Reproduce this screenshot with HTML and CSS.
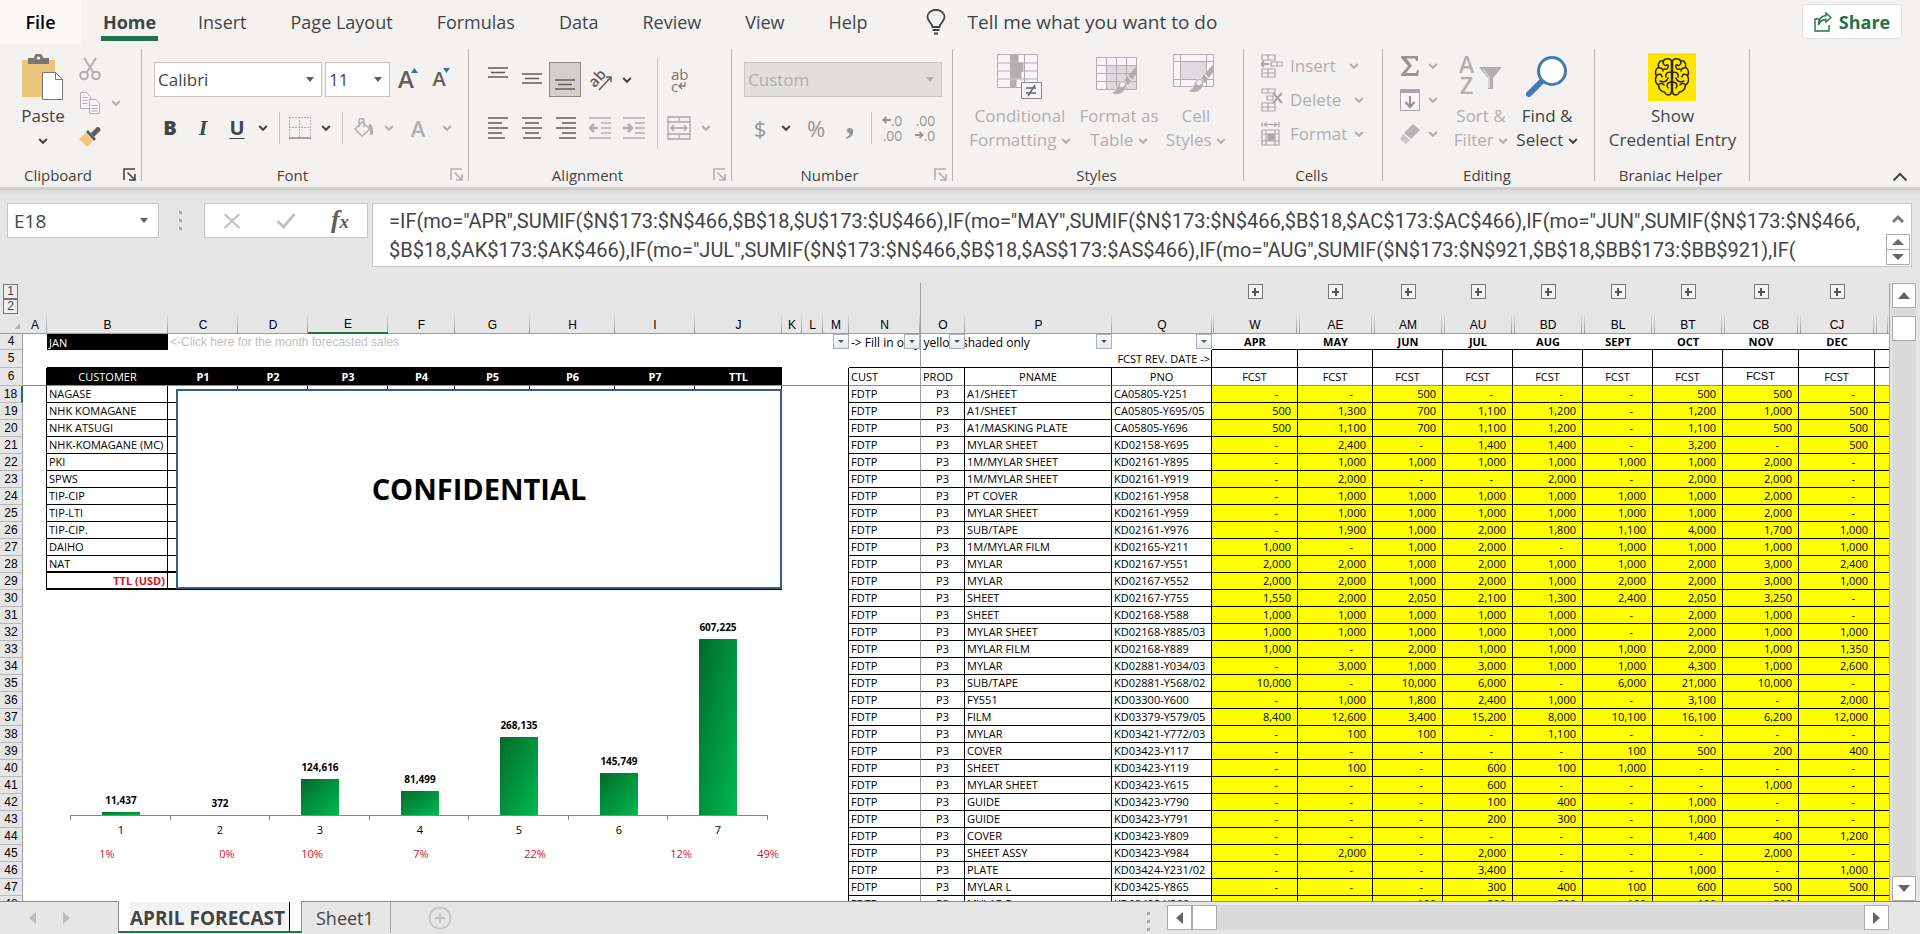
FILE: index.html
```html
<!DOCTYPE html>
<html lang="en">
<head>
<meta charset="utf-8">
<title>April Forecast</title>
<link rel="stylesheet" href="styles.css">
</head>
<body>
<svg class="defs" aria-hidden="true">
  <symbol id="chev" viewBox="0 0 10 10"><path d="M1.200 3l3.800 3.800L8.800 3" fill="none" stroke="currentColor" stroke-width="2"/></symbol>
  <symbol id="launch" viewBox="0 0 14 14"><path d="M1 12V1h11M4.500 4.500l7 7M12 6v6H6" fill="none" stroke="currentColor" stroke-width="1.600"/></symbol>
  <symbol id="brush" viewBox="0 0 34 44"><path d="M33 0v10L22 25l-6-5z" fill="#b1aeb0"/><path d="M22 13l5 6" stroke="#f3f2f1" stroke-width="1.500"/><path d="M17 19c-4-1-8 3-9 8-1 4-4 7-8 8 7 4 16 1 19-6 2-4 1-9-2-10z" fill="#b1aeb0" stroke="#f3f2f1"/><path d="M16 20c-4 0-6 4-5 7 4 2 7 0 8-4z" fill="#f3f2f1" stroke="#b1aeb0"/></symbol>
</svg>

<header class="ribbon">
  <nav class="tabs">
    <button class="tab file">File</button>
    <button class="tab home">Home</button>
    <button class="tab">Insert</button>
    <button class="tab">Page Layout</button>
    <button class="tab">Formulas</button>
    <button class="tab">Data</button>
    <button class="tab">Review</button>
    <button class="tab">View</button>
    <button class="tab">Help</button>
    <button class="tab tell"><svg width="20" height="26" viewBox="0 0 20 26" fill="none" stroke="#444" stroke-width="1.800"><path d="M6.500 18c0-4-5-5-5-10a8.500 7.200 0 0 1 17 0c0 5-5 6-5 10zM6.500 21h7"/><path d="M8 24.500h4" stroke-width="2"/></svg>Tell me what you want to do</button>
    <button class="share"><svg width="18" height="20" viewBox="0 0 18 20" fill="none" stroke="#217346" stroke-width="1.400"><path d="M5 7H1v12h14v-6"/><path d="M12 1l5 4.500-5 4.500V7.500C8 7.500 6 9 4.500 13 4.500 7 8 4 12 3.500z"/></svg>Share</button>
  </nav>

  <div class="groups">
    <section class="group g-clip">
      <div class="tools">
        <button class="big paste">
          <span class="pic"><svg width="42" height="46" viewBox="0 0 42 46"><rect x="0" y="6" width="33" height="37" fill="#ecc57c"/><path d="M6 4h6a4.500 4.500 0 0 1 9 0h6v6H6z" fill="#797775"/><circle cx="16.500" cy="4" r="1.600" fill="#f3f2f1"/><path d="M20.500 18.500h13l7 7v20h-20z" fill="#fff" stroke="#797775"/><path d="M33.500 18.500v7h7" fill="none" stroke="#797775"/></svg></span>
          <span>Paste</span><span><svg class="ch"><use href="#chev"/></svg></span>
        </button>
        <div class="stack">
          <button aria-label="Cut"><svg width="22" height="24" viewBox="0 0 22 24" fill="none" stroke="#b1aeb0"><g stroke-width="2"><path d="M5 1l9 14M17 1L8 15"/><circle cx="5" cy="18.500" r="3.800"/><circle cx="17" cy="18.500" r="3.800"/></g></svg></button>
          <button aria-label="Copy"><svg width="22" height="24" viewBox="0 0 22 24" fill="#f8f5fa" stroke="#b1aeb0"><path d="M1.500 1.500h6l4 4v12h-10z"/><path d="M3.500 6.500h5M3.500 9.500h5M3.500 12.500h5"/><path d="M10.500 8.500h6l4 4v10h-10z"/><path d="M12.500 14.500h6M12.500 17.500h6M12.500 20h6"/></svg><svg class="ch dim"><use href="#chev"/></svg></button>
          <button aria-label="Format Painter"><svg width="22" height="22" viewBox="0 0 22 22"><path d="M0 13l7-6 7 8-6 6z" fill="#ecc57c"/><path d="M7 6l2-2 8 9-2 2z" fill="#605e5c"/><path d="M12 7l6-6c3 0 4 2 3 4l-6 6z" fill="#605e5c"/></svg></button>
        </div>
      </div>
      <footer>Clipboard<button class="launch" aria-label="Clipboard options"><svg width="14" height="14"><use href="#launch"/></svg></button></footer>
    </section>

    <section class="group g-font">
      <div class="rows">
        <div class="row r-face">
          <span class="drop"><select aria-label="Font"><option>Calibri</option></select></span>
          <span class="drop"><select aria-label="Font size"><option>11</option></select></span>
          <button class="grow" aria-label="Increase font size"><b>A</b><svg width="7" height="6"><path d="M0 5l3.500-5L7 5z" fill="#3b6fae"/></svg></button>
          <button class="grow small" aria-label="Decrease font size"><b>A</b><svg width="7" height="6"><path d="M0 0h7L3.500 5z" fill="#3b6fae"/></svg></button>
        </div>
        <div class="row r-style">
          <button><b>B</b></button><button><i>I</i></button><button><u>U</u></button><button aria-label="Underline styles"><svg class="ch"><use href="#chev"/></svg></button><hr>
          <button aria-label="Borders"><svg width="22" height="22" viewBox="0 0 22 22" fill="none" stroke="#b7a9c4"><path d="M.5 0v20M10.500 0v20M21.500 0v20M0 .5h22M0 10.500h22" stroke-dasharray="2 1"/><path d="M0 21h22" stroke="#8a8886" stroke-width="1.500"/></svg></button>
          <button aria-label="Border styles"><svg class="ch"><use href="#chev"/></svg></button><hr>
          <button aria-label="Fill color"><svg width="20" height="20" viewBox="0 0 20 20" fill="none" stroke="#b1aeb0" stroke-width="1.500"><path d="M8 4l8 7-8 7-7-7zM5 9V3a2.500 2.500 0 0 1 5 0v6"/><path d="M15 7c3 2 3 6 2 10" stroke-width="3"/></svg></button>
          <button aria-label="Fill colors"><svg class="ch dim"><use href="#chev"/></svg></button>
          <button class="dimtext fontcolor">A</button>
          <button aria-label="Font colors"><svg class="ch dim"><use href="#chev"/></svg></button>
        </div>
      </div>
      <footer>Font<button class="launch dimtext" aria-label="Font options"><svg width="14" height="14"><use href="#launch"/></svg></button></footer>
    </section>

    <section class="group g-align">
      <div class="rows">
        <div class="row r-al r-top">
          <button aria-label="Top align"><svg class="ln" viewBox="0 0 20 34"><path d="M0 5h20M3 9.500h14M0 14h20"/></svg></button>
          <button aria-label="Middle align"><svg class="ln" viewBox="0 0 20 34"><path d="M0 11h20M3 15.500h14M0 20h20"/></svg></button>
          <button class="pressed" aria-label="Bottom align"><svg class="ln" viewBox="0 0 20 34"><path d="M0 17h20M3 21.500h14M0 26h20"/></svg></button>
          <button aria-label="Orientation"><svg width="24" height="24" viewBox="0 0 24 24"><text transform="rotate(-48 10 10)" x="-1" y="13" font-size="15" font-weight="600" fill="#605e5c">ab</text><path d="M9 22L21 9M16 9h5v5" fill="none" stroke="#605e5c" stroke-width="1.500"/></svg></button>
          <button aria-label="Orientations"><svg class="ch"><use href="#chev"/></svg></button>
        </div>
        <div class="row r-al">
          <button aria-label="Align left"><svg class="ln" viewBox="0 0 20 34"><path d="M0 7h20M0 12h14M0 17h20M0 22h14M0 27h17"/></svg></button>
          <button aria-label="Center"><svg class="ln" viewBox="0 0 20 34"><path d="M0 7h20M3 12h14M0 17h20M3 22h14M1 27h18"/></svg></button>
          <button aria-label="Align right"><svg class="ln" viewBox="0 0 20 34"><path d="M0 7h20M6 12h14M0 17h20M6 22h14M3 27h17"/></svg></button>
          <button aria-label="Decrease indent"><svg class="ln dim wide" viewBox="0 0 22 34"><path d="M0 7h22M12 12h10M12 17h10M12 22h10M0 27h22"/><path d="M1 17h8M5 13l-4 4 4 4" stroke-width="2.500"/></svg></button>
          <button aria-label="Increase indent"><svg class="ln dim wide" viewBox="0 0 22 34"><path d="M0 7h22M12 12h10M12 17h10M12 22h10M0 27h22"/><path d="M0 17h8M5 13l4 4-4 4" stroke-width="2.500"/></svg></button>
        </div>
      </div>
      <div class="wrapcol">
        <button class="wrap" aria-label="Wrap text"><span>ab</span><span>c<svg width="8" height="8" viewBox="0 0 8 8" fill="none" stroke="#797775"><path d="M7 0v4H1M4 1L1 4l3 3" stroke-width="1.300"/></svg></span></button>
        <button class="merge" aria-label="Merge and center"><svg width="24" height="24" viewBox="0 0 24 24" fill="none" stroke="#a9a5aa" stroke-width="1.300"><path d="M1 1h22v22H1zM1 6h22M1 18h22M12 1v5M12 18v5"/><path d="M4 12h16M7 9l-3 3 3 3M17 9l3 3-3 3"/></svg><svg class="ch dim"><use href="#chev"/></svg></button>
      </div>
      <footer>Alignment<button class="launch dimtext" aria-label="Alignment options"><svg width="14" height="14"><use href="#launch"/></svg></button></footer>
    </section>

    <section class="group g-num">
      <div class="rows">
        <div class="row"><span class="drop off"><select aria-label="Number format"><option>Custom</option></select></span></div>
        <div class="row r-num">
          <button class="sym">$</button><button aria-label="Currencies"><svg class="ch"><use href="#chev"/></svg></button><button class="sym pct">%</button><button class="sym comma">,</button><hr>
          <button class="dec"><span><svg width="9" height="8" viewBox="0 0 9 8"><path d="M1 4h8M4.500 1l-3 3 3 3" fill="none" stroke="#979593" stroke-width="2"/></svg>.0</span><span>.00</span></button><button class="dec"><span>.00</span><span><svg width="9" height="8" viewBox="0 0 9 8"><path d="M0 4h8M4.500 1l3 3-3 3" fill="none" stroke="#979593" stroke-width="2"/></svg>.0</span></button>
        </div>
      </div>
      <footer>Number<button class="launch dimtext" aria-label="Number options"><svg width="14" height="14"><use href="#launch"/></svg></button></footer>
    </section>

    <section class="group g-styles">
      <div class="tools">
        <button class="big dimtext"><span class="pic"><svg width="46" height="46" viewBox="0 0 46 46" stroke="#b1aeb0" fill="#f8f5fa"><path d="M.5.500h40v33H.5z"/><path d="M13.500 0v34M27.500 0v34M0 9h41M0 17h41M0 25h41"/><path d="M14 1h7v7h-7zM14 9h12v8H14zM14 17h10v7H14zM14 26h5v7h-5z" fill="#b1aeb0"/><path d="M24.500 28.500h20v16h-20z" stroke="#888"/><path d="M29 34h10M29 39h10M38 31l-7 11" stroke="#666" stroke-width="1.500"/></svg></span><span>Conditional</span><span>Formatting <svg class="ch"><use href="#chev"/></svg></span></button>
        <button class="big dimtext"><span class="pic"><svg width="46" height="46" viewBox="0 0 46 46"><path d="M.5 3.500h40v32H.5z" fill="#f8f5fa" stroke="#b1aeb0"/><path d="M10 12h30v23H10z" fill="#dedadd"/><path d="M10.500 4v31M20.500 4v31M30.500 4v31M0 11.500h41M0 19.500h41M0 27.500h41" stroke="#b1aeb0"/><use href="#brush" x="11" y="12" width="34" height="34"/></svg></span><span>Format as</span><span>Table <svg class="ch"><use href="#chev"/></svg></span></button>
        <button class="big dimtext"><span class="pic"><svg width="46" height="46" viewBox="0 0 46 46"><path d="M.5.500h40v32H.5z" fill="#f8f5fa" stroke="#b1aeb0"/><path d="M7.500 0v33M33.500 0v33M0 7.500h41M0 25.500h41" stroke="#b1aeb0"/><path d="M8 8h25v17H8z" fill="#dedadd"/><use href="#brush" x="11" y="10" width="34" height="34"/></svg></span><span>Cell</span><span>Styles <svg class="ch"><use href="#chev"/></svg></span></button>
      </div>
      <footer>Styles</footer>
    </section>

    <section class="group g-cells">
      <div class="stack dimtext">
        <button><svg width="22" height="24" viewBox="0 0 22 24" fill="none" stroke="#a9a5aa" stroke-width="1.200"><path d="M1 1h13v5H1zM7 1v5M1 15h13v8H1zM7 15v8M1 19h13M10 8h12v4H10zM16 8v4"/><path d="M0 10h8M3 7l-3 3 3 3" stroke-width="1.800"/></svg>Insert<svg class="ch far"><use href="#chev"/></svg></button>
        <button><svg width="22" height="24" viewBox="0 0 22 24" fill="none" stroke="#a9a5aa" stroke-width="1.200"><path d="M1 1h13v4H1zM7 1v4M1 15h13v8H1zM7 15v8M1 19h13M6 8h6v4H6z"/><path d="M12 5l9 10M21 5l-9 10" stroke-width="2.200"/></svg>Delete<svg class="ch far"><use href="#chev"/></svg></button>
        <button><svg width="22" height="24" viewBox="0 0 22 24" fill="none" stroke="#a9a5aa" stroke-width="1.200"><path d="M1 0v5M18 0v5M3 2.500h13M6 .5l-3 2 3 2M13 .5l3 2-3 2M1 8h17v15H1zM5 8v15M14 8v15M1 12h17M1 19h17"/><path d="M7 12h6v6H7z" fill="#a9a5aa"/></svg>Format<svg class="ch"><use href="#chev"/></svg></button>
      </div>
      <footer>Cells</footer>
    </section>

    <section class="group g-edit">
      <div class="tools">
        <div class="stack dimtext">
          <button aria-label="AutoSum"><svg width="20" height="20" viewBox="0 0 20 20"><path d="M1 0h17v5h-1.500L15 2.500H6.500L12 9.500 6 17h10l1.500-3H19l-1 6H1v-1.500L8 10 1 1.500z" fill="#979593"/></svg><svg class="ch"><use href="#chev"/></svg></button>
          <button aria-label="Fill"><svg width="20" height="22" viewBox="0 0 20 22"><path d="M.5.500h19v21H.5z" fill="#f8f5fa" stroke="#a9a5aa"/><path d="M0 0h20v4H0z" fill="#a9a5aa"/><path d="M10 7v10M5.500 13l4.500 5 4.500-5" fill="none" stroke="#979593" stroke-width="2.200"/></svg><svg class="ch"><use href="#chev"/></svg></button>
          <button aria-label="Clear"><svg width="20" height="20" viewBox="0 0 20 20"><path d="M13 0l7 6-9 9-7-6z" fill="#b5b2b4"/><path d="M3 10l7 6-4 4-6-5z" fill="#c8c5c7"/></svg><svg class="ch"><use href="#chev"/></svg></button>
        </div>
        <button class="big dimtext"><span class="pic"><svg width="44" height="46" viewBox="0 0 44 46"><text x="0" y="19" font-size="23" font-weight="600" fill="#b1aeb0">A</text><text x="1" y="40" font-size="23" font-weight="600" fill="#b1aeb0">Z</text><path d="M20 13h23L34 24v11h-5V24z" fill="#b1aeb0"/><path d="M24 15l6 8v11" fill="none" stroke="#f3f2f1"/></svg></span><span>Sort &amp;</span><span>Filter <svg class="ch"><use href="#chev"/></svg></span></button>
        <button class="big"><span class="pic"><svg width="42" height="42" viewBox="0 0 42 42"><path d="M3 38L16 25" stroke="#4678b4" stroke-width="6" stroke-linecap="round"/><circle cx="26" cy="15" r="13.500" fill="#fff" stroke="#4678b4" stroke-width="3"/></svg></span><span>Find &amp;</span><span>Select <svg class="ch"><use href="#chev"/></svg></span></button>
      </div>
      <footer>Editing</footer>
    </section>

    <section class="group g-brain">
      <div class="tools">
        <button class="big"><span class="pic"><svg width="48" height="48" viewBox="0 0 48 48"><path d="M0 0h48v48H0z" fill="#ffe600"/><g fill="none" stroke="#2b2400" stroke-width="1.500" stroke-linecap="round"><path id="lobe" d="M23.500 8c-1-3-7-3-8 0-4-1-6 3-5 6-3 2-4 6-2 9-2 3-1 8 2 9 0 4 3 7 6 7 2 4 6 4 7 0zM15 9c0 3 2 4 4 3M10 15c3-1 5 1 5 3M16 16c3 1 5-1 4-4M9 22c3-2 5 0 5 2M23 19c-4 0-6 2-5 5M12 28c4 2 7 0 8-3M10 32c2-2 5-2 6 0M23 29c-4 0-5 4-3 6"/><use href="#lobe" transform="matrix(-1 0 0 1 48 0)"/></g></svg></span><span>Show</span><span>Credential Entry</span></button>
      </div>
      <footer>Braniac Helper</footer>
    </section>
    <button class="collapse" aria-label="Collapse ribbon"><svg width="16" height="10" viewBox="0 0 16 10"><path d="M1.500 8.500L8 2l6.500 6.500" fill="none" stroke="#444" stroke-width="2"/></svg></button>
  </div>
</header>

<div class="fbar">
  <span class="drop name"><input aria-label="Name box" value="E18"></span>
  <span class="dots"></span>
  <div class="fx">
    <button aria-label="Cancel"><svg width="18" height="16" viewBox="0 0 18 16"><path d="M1.500 1l15 14M16.500 1l-15 14" stroke="#c3c1bf" stroke-width="2.300"/></svg></button>
    <button aria-label="Enter"><svg width="20" height="16" viewBox="0 0 20 16"><path d="M1.500 8l6 6L18.500 1" fill="none" stroke="#c3c1bf" stroke-width="3"/></svg></button>
    <button class="fn" aria-label="Insert function"><i>f<small>x</small></i></button>
  </div>
  <div class="formula">
    <textarea aria-label="Formula" rows="2" spellcheck="false">=IF(mo="APR",SUMIF($N$173:$N$466,$B$18,$U$173:$U$466),IF(mo="MAY",SUMIF($N$173:$N$466,$B$18,$AC$173:$AC$466),IF(mo="JUN",SUMIF($N$173:$N$466,
$B$18,$AK$173:$AK$466),IF(mo="JUL",SUMIF($N$173:$N$466,$B$18,$AS$173:$AS$466),IF(mo="AUG",SUMIF($N$173:$N$921,$B$18,$BB$173:$BB$921),IF(</textarea>
    <div class="spin">
      <button aria-label="Collapse formula bar"><svg width="12" height="10" viewBox="0 0 12 10"><path d="M1 8l5-5 5 5" fill="none" stroke="#777" stroke-width="3"/></svg></button>
      <button class="boxed" aria-label="Scroll up"><svg width="12" height="6"><path d="M0 6l6-6 6 6z" fill="#666"/></svg></button>
      <button class="boxed" aria-label="Scroll down"><svg width="12" height="6"><path d="M0 0h12L6 6z" fill="#666"/></svg></button>
    </div>
  </div>
</div>

<main class="work">
  <div class="sheet">
    <table id="grid"></table>
    <div class="levels"><button>1</button><button>2</button></div>
    <div class="cover">CONFIDENTIAL</div>
    <svg class="chart" id="chart" width="740" height="260" role="img" aria-label="Forecast by period"></svg>
  </div>
  <div class="vscroll">
    <button aria-label="Scroll up"><svg width="12" height="7"><path d="M0 7l6-7 6 7z" fill="#666"/></svg></button>
    <span class="thumb"></span>
    <button class="end" aria-label="Scroll down"><svg width="12" height="7"><path d="M0 0h12L6 7z" fill="#666"/></svg></button>
  </div>
</main>

<footer class="bottom">
  <button class="nav" aria-label="Previous sheet"><svg width="7" height="12"><path d="M7 0v12L0 6z" fill="#bbb"/></svg></button>
  <button class="nav" aria-label="Next sheet"><svg width="7" height="12"><path d="M0 0v12l7-6z" fill="#bbb"/></svg></button>
  <div class="sheettab active"><input aria-label="Sheet name" value="APRIL FORECAST"></div>
  <button class="sheettab">Sheet1</button>
  <button class="add" aria-label="New sheet"><svg width="24" height="24" viewBox="0 0 24 24" fill="none" stroke="#c3c1bf"><circle cx="12" cy="12" r="10.500" stroke-width="1.500"/><path d="M12 7v10M7 12h10" stroke-width="2"/></svg></button>
  <span class="dots"></span>
  <div class="hscroll">
    <button aria-label="Scroll left"><svg width="7" height="12"><path d="M7 0v12L0 6z" fill="#666"/></svg></button>
    <span class="thumb"></span>
    <button class="end" aria-label="Scroll right"><svg width="7" height="12"><path d="M0 0v12l7-6z" fill="#666"/></svg></button>
  </div>
</footer>
<script src="sheet.js"></script>
</body>
</html>
```
FILE: styles.css
```css
* { box-sizing: border-box; }
body { margin: 0; height: 100vh; display: flex; flex-direction: column; overflow: hidden; background: #e6e6e6; color: #444; font: 17px/24px "Open Sans", "Noto Sans", sans-serif; }
button, input, select, textarea { font: inherit; color: inherit; background: none; border: 0; padding: 0; margin: 0; outline: 0; border-radius: 0; }
button { display: flex; align-items: center; justify-content: center; white-space: nowrap; }
svg { display: block; flex: none; }
svg text { font-family: "Open Sans", "Noto Sans", sans-serif; }
hr { width: 1px; height: 32px; margin: 0 auto; border: 0; background: #c8c6c4; }
.defs { position: absolute; width: 0; height: 0; }
.ch { width: 10px; height: 10px; display: inline-block; color: #444; }
.ch.dim, .dimtext .ch { color: #b1aeb0; }
.dimtext { color: #b1aeb0; }

.ribbon { flex: none; background: #f3f2f1; border-bottom: 3px solid #d2d0ce; }
.tabs { display: flex; height: 49px; font-size: 18px; }
.tab { height: 44px; margin-right: 44px; flex: none; }
.tab.file { width: 81px; margin-right: 20px; background: #faf9f8; color: #000; font-weight: 600; }
.tab.home { font-weight: 700; width: 57px; margin-right: 40px; box-shadow: inset 0 -3px #f3f2f1, inset 0 -8px #217346; }
.tell { gap: 22px; margin-left: 14px; font-size: 19px; }
.share { margin: 4px 18px 0 auto; width: 100px; height: 35px; gap: 7px; background: #fff; border: 1px solid #e1dfdd; border-radius: 3px; color: #217346; font-weight: 700; }

.groups { display: flex; height: 138px; }
.group { display: grid; grid-template-rows: 114px 24px; grid-template-columns: minmax(0, 1fr); flex: none; position: relative; background: linear-gradient(#b8b6b4, #b8b6b4) right 0 top 0 / 1px 132px no-repeat; }
.group footer { grid-column: 1 / -1; text-align: center; font-size: 15px; padding-right: 4px; }
.launch { position: absolute; right: 5px; bottom: 5px; }
.g-clip { width: 142px; } .g-font { width: 327px; } .g-align { width: 263px; grid-template-columns: 188px 75px; } .g-num { width: 221px; }
.g-styles { width: 291px; } .g-cells { width: 139px; } .g-edit { width: 212px; } .g-brain { width: 155px; }
.g-clip footer, .g-font footer, .g-align footer, .g-num footer { padding-right: 26px; }
.tools { display: flex; align-items: flex-start; }
.big { display: block; text-align: center; line-height: 24px; }
.big > span { display: block; height: 24px; }
.big > .pic { height: 55px; display: flex; align-items: center; justify-content: center; }
.stack button { height: 34px; justify-content: flex-start; gap: 7px; }
.paste { width: 84px; padding-left: 2px; }
.g-clip .stack { margin: 3px 0 0 -5px; }
.g-clip .stack button { gap: 10px; }
.g-styles .tools { padding-left: 12px; gap: 2px; }
.g-styles .big { width: 110px; } .g-styles .big + .big { width: 84px; } .g-styles .big + .big + .big { width: 66px; }
.g-cells .stack { padding-left: 17px; }
.g-cells .far { margin-left: 6px; }
.g-edit .tools { padding-left: 17px; }
.g-edit .stack { width: 48px; } .g-edit .stack button { gap: 8px; }
.g-edit .big { width: 66px; }
.g-brain .tools { justify-content: center; }

.rows { padding-top: 13px; }
.row { display: grid; align-items: center; height: 35px; margin-bottom: 13px; }
.g-font .rows { padding-left: 12px; }
.r-face { grid-template-columns: 168px 65px 30px 30px; column-gap: 3px; }
.r-style { grid-template-columns: 32px 34px 34px 18px 14px 28px 24px 8px 36px 14px 44px 14px; font-size: 20px; }
.r-style i { font-family: "Liberation Serif", serif; font-weight: 700; font-size: 22px; }
.r-style b { font-weight: 800; }
.r-style u { font-weight: 700; text-underline-offset: 3px; text-decoration-thickness: 1px; }
.fontcolor { font-size: 22px; font-weight: 600; }
.drop { position: relative; display: block; height: 35px; background: #fff; border: 1px solid #c8c6c4; }
.drop select, .drop input { width: 100%; height: 100%; appearance: none; padding-left: 3px; }
.drop::after { content: ""; position: absolute; right: 7px; top: 14px; border: 4px solid transparent; border-top: 5px solid #605e5c; border-bottom: 0; }
.drop.off { background: #e1dfdd; color: #b1aeb0; margin: 0 11px 0 12px; }
.drop.off::after { border-top-color: #b1aeb0; }
.grow { align-items: flex-start; color: #605e5c; font-size: 24px; height: 35px; line-height: 34px; }
.grow svg { margin: 6px 0 0 -3px; }
.grow.small { font-size: 20px; }
.grow b { font-weight: 600; }
.g-align .rows { padding-left: 12px; }
.r-al { grid-template-columns: repeat(5, 34px); }
.r-al.r-top { grid-template-columns: 34px 34px 34px 38px 12px; }
.r-al button { height: 35px; }
.ln { width: 20px; height: 34px; fill: none; stroke: #605e5c; stroke-width: 1.4px; }
.ln.wide { width: 22px; }
.ln.dim { stroke: #b1aeb0; }
.pressed { background: #d2d0ce; border: 1px solid #8a8886; width: 32px; }
.wrapcol { background: linear-gradient(#c8c6c4, #c8c6c4) 0 9px / 1px 91px no-repeat; padding: 13px 0 0 10px; }
.wrapcol .wrap { display: flex; flex-direction: column; width: 30px; height: 35px; line-height: 12px; font-size: 15px; color: #797775; align-items: flex-start; padding-left: 4px; }
.wrap span { display: flex; align-items: center; }
.merge { height: 35px; margin-top: 13px; gap: 10px; }
.r-num { padding-left: 12px; grid-template-columns: 32px 20px 40px 28px 14px 28px 38px; }
.sym { font-size: 22px; color: #979593; }
.comma { font: 700 36px/20px "Liberation Serif", serif; padding-bottom: 14px; }
.dec { display: grid; font-size: 14px; line-height: 15px; color: #979593; justify-content: center; }
.dec span { display: flex; align-items: center; justify-content: flex-end; }
.collapse { margin: auto 12px 3px auto; height: 14px; }

.fbar { flex: none; display: flex; height: 93px; padding: 13px 8px 0 7px; background: linear-gradient(#dcdcdc, #e6e6e6 6px); }
.name { width: 152px; font-size: 19px; flex: none; }
.name input { padding-left: 6px; }
.name::after { right: 10px; }
.dots { width: 3px; height: 19px; margin: 8px 22px 0 20px; background: repeating-linear-gradient(#aaa 0 3px, transparent 3px 8px); flex: none; }
.fx { display: flex; width: 164px; height: 35px; background: #fff; border: 1px solid #c8c6c4; flex: none; }
.fx button { flex: 1; }
.fn i { font: italic 700 26px/30px "Liberation Serif", serif; color: #605e5c; }
.fn small { font-size: 19px; }
.formula { flex: 1; min-width: 0; display: flex; height: 64px; margin-left: 4px; background: #fff; border: 1px solid #c8c6c4; }
.formula textarea { flex: 1; min-width: 0; resize: none; overflow: hidden; white-space: pre; padding: 3px 0 0 16px; font: 20px/29px Roboto, "Open Sans", sans-serif; }
.spin { width: 25px; padding-right: 1px; display: flex; flex-direction: column; }
.spin button { height: 30px; }
.spin .boxed { height: 16px; border: 1px solid #ababab; margin-bottom: -1px; }

.work { flex: 1; min-height: 0; display: flex; }
.sheet { flex: 1; min-width: 0; position: relative; overflow: hidden; border-right: 1px solid #a6a6a6; background: linear-gradient(#e6e6e6 51px, #fff 51px); }
#grid { width: 100%; table-layout: fixed; border-collapse: separate; border-spacing: 0; color: #000; font-size: 11px; line-height: 16px; }
#grid th, #grid td { padding: 0; height: 17px; white-space: nowrap; font-weight: 400; text-align: left; border: 0 solid #000; position: static; }
#grid .outline th { height: 32px; background: #e6e6e6; vertical-align: top; }
#grid .letters th { height: 19px; padding-top: 2px; font: 12px/16px "Liberation Sans", sans-serif; text-align: center; background: linear-gradient(#dedede, #9b9b9b) right 0 top 0 / 1px 18px no-repeat #e6e6e6; border-bottom: 1px solid #9b9b9b; }
#grid .letters .far { background: linear-gradient(#dedede, #9b9b9b) left 1px top 0 / 1px 18px no-repeat, linear-gradient(#dedede, #9b9b9b) right 1px top 0 / 1px 18px no-repeat, #e6e6e6; }
#grid .letters .on { border-bottom: 2px solid #217346; line-height: 15px; }
#grid .corner { background: linear-gradient(135deg, transparent 75%, #b0b0b0 75%) 10px 4px / 10px 10px no-repeat #e6e6e6 !important; }
.plus { width: 15px; height: 15px; margin: 1px auto 0; border: 1px solid #777; background: linear-gradient(#555, #555) 50% 50% / 7px 2px no-repeat, linear-gradient(#555, #555) 50% 50% / 2px 8px no-repeat, #f4f4f4; }
#grid .num { font: 12px/16px "Liberation Sans", sans-serif; text-align: center; background: #e6e6e6; border-right: 1px solid #a0a0a0; border-bottom: 1px solid #b8b8b8; }
#grid .num.on { border-right: 2px solid #217346; }
#grid .r { border-right-width: 1px; }
#grid .b { border-bottom-width: 1px; }
#grid .freeze { border-right: 1px solid #a0a0a0; }
#grid .t { padding-left: 2px; }
#grid .c { text-align: center; }
#grid .n { text-align: right; padding-right: 6px; }
#grid .dash { text-align: right; padding-right: 19px; }
#grid .y { background: #ff0; }
#grid .k { background: #000; color: #fff; border-color: #000; }
#grid .bold { font-weight: 700; }
#grid .over { text-align: right; direction: rtl; padding-right: 2px; }
#grid .over bdi { direction: ltr; }
#grid .hint { color: #bfbfbf; font: 12px/15px "Liberation Sans", sans-serif; padding-left: 2px; }
#grid .fill { font-size: 12px; }
#grid .alt { font: 11px/17px "Liberation Sans", sans-serif; }
#grid .rowtall td, #grid .rowtall th { height: 18px; line-height: 17px; }
#grid .row4 td, #grid .row4 th { height: 16px; line-height: 15px; }
#grid .rowend td { border-bottom: 1px solid #8c8c8c; }
#grid .total { color: #d8111b; font-weight: 700; text-align: right; padding-right: 2px; }
#grid .thick { border-bottom-width: 2px; line-height: 15px; }
#grid td.has { position: relative; }
.filter { position: absolute; right: 0; top: 0; width: 16px; height: 15px; background: linear-gradient(#fff, #e4e8ee); border: 1px solid #a9b0bb; }
.filter::after { content: ""; border: 3px solid transparent; border-top-color: #555; border-bottom: 0; }
.levels { position: absolute; left: 3px; top: 1px; }
.levels button { width: 15px; height: 15px; border: 1px solid #777; background: #eee; font: 12px/13px "Liberation Sans", sans-serif; }
.cover { position: absolute; left: 176px; top: 106px; width: 606px; height: 200px; background: #fff; border: 2px solid #385d8a; color: #000; font-size: 29px; font-weight: 700; display: flex; align-items: center; justify-content: center; }
.chart { position: absolute; left: 50px; top: 334px; }
.chart text { font-size: 11px; text-anchor: middle; }
.chart .val { font-weight: 700; font-size: 10px; }
.chart .share-pct { fill: #d8111b; }

.vscroll { width: 30px; padding: 0 4px 0 2px; display: flex; flex-direction: column; background: linear-gradient(#dadada, #dadada) 2px 0 / 24px 100% no-repeat; }
.vscroll button, .vscroll .thumb { height: 25px; background: #fff; border: 1px solid #ababab; flex: none; }
.vscroll .thumb { margin-top: 8px; }
.vscroll .end { margin-top: auto; }

.bottom { flex: none; display: flex; height: 33px; border-top: 1px solid #8c8c8c; padding-right: 31px; }
.nav { width: 34px; }
.nav:first-child { margin-left: 15px; }
.sheettab { height: 31px; font-size: 18px; line-height: 26px; padding: 0 16px 0 14px; border-right: 1px solid #a6a6a6; }
.sheettab.active { margin: -1px 0 0 35px; width: 184px; padding: 1px 11px 0; background: #fff; border: 1px solid #8c8c8c; border-top: 0; border-bottom: 2px solid #217346; height: 32px; }
.sheettab.active input { width: 160px; height: 29px; padding-top: 2px; font-size: 19px; font-weight: 700; background: #f3f3f3; border-right: 1px solid #000; }
.add { margin: 3px 0 0 37px; height: 26px; }
.bottom .dots { margin: 10px 17px 0 auto; }
.hscroll { display: flex; width: 722px; height: 25px; margin-top: 3px; background: #dadada; }
.hscroll button, .hscroll .thumb { width: 25px; background: #fff; border: 1px solid #ababab; }
.hscroll .end { margin-left: auto; }
```
FILE: sheet.js
```js
const columns = [
  ['', 23], ['A', 24], ['B', 121], ['C', 70], ['D', 70], ['E', 80], ['F', 67], ['G', 75], ['H', 85], ['I', 80], ['J', 87],
  ['K', 20], ['L', 21], ['M', 26], ['N', 72], ['O', 44], ['P', 147], ['Q', 100], ['W', 86], ['AE', 75], ['AM', 70],
  ['AU', 70], ['BD', 70], ['BL', 70], ['BT', 70], ['CB', 76], ['CJ', 76], ['', 0]
];
const months = ['APR', 'MAY', 'JUN', 'JUL', 'AUG', 'SEPT', 'OCT', 'NOV', 'DEC'];
const customers = ['NAGASE', 'NHK KOMAGANE', 'NHK ATSUGI', 'NHK-KOMAGANE (MC)', 'PKI', 'SPWS', 'TIP-CIP', 'TIP-LTI', 'TIP-CIP.', 'DAIHO', 'NAT', 'TTL (USD)'];
const products = `A1/SHEET|CA05805-Y251|- - 500 - - - 500 500 -
A1/SHEET|CA05805-Y695/05|500 1,300 700 1,100 1,200 - 1,200 1,000 500
A1/MASKING PLATE|CA05805-Y696|500 1,100 700 1,100 1,200 - 1,100 500 500
MYLAR SHEET|KD02158-Y695|- 2,400 - 1,400 1,400 - 3,200 - 500
1M/MYLAR SHEET|KD02161-Y895|- 1,000 1,000 1,000 1,000 1,000 1,000 2,000 -
1M/MYLAR SHEET|KD02161-Y919|- 2,000 - - 2,000 - 2,000 2,000 -
PT COVER|KD02161-Y958|- 1,000 1,000 1,000 1,000 1,000 1,000 2,000 -
MYLAR SHEET|KD02161-Y959|- 1,000 1,000 1,000 1,000 1,000 1,000 2,000 -
SUB/TAPE|KD02161-Y976|- 1,900 1,000 2,000 1,800 1,100 4,000 1,700 1,000
1M/MYLAR FILM|KD02165-Y211|1,000 - 1,000 2,000 - 1,000 1,000 1,000 1,000
MYLAR|KD02167-Y551|2,000 2,000 1,000 2,000 1,000 1,000 2,000 3,000 2,400
MYLAR|KD02167-Y552|2,000 2,000 1,000 2,000 1,000 2,000 2,000 3,000 1,000
SHEET|KD02167-Y755|1,550 2,000 2,050 2,100 1,300 2,400 2,050 3,250 -
SHEET|KD02168-Y588|1,000 1,000 1,000 1,000 1,000 - 2,000 1,000 -
MYLAR SHEET|KD02168-Y885/03|1,000 1,000 1,000 1,000 1,000 - 2,000 1,000 1,000
MYLAR FILM|KD02168-Y889|1,000 - 2,000 1,000 1,000 1,000 2,000 1,000 1,350
MYLAR|KD02881-Y034/03|- 3,000 1,000 3,000 1,000 1,000 4,300 1,000 2,600
SUB/TAPE|KD02881-Y568/02|10,000 - 10,000 6,000 - 6,000 21,000 10,000 -
FY551|KD03300-Y600|- 1,000 1,800 2,400 1,000 - 3,100 - 2,000
FILM|KD03379-Y579/05|8,400 12,600 3,400 15,200 8,000 10,100 16,100 6,200 12,000
MYLAR|KD03421-Y772/03|- 100 100 - 1,100 - - - -
COVER|KD03423-Y117|- - - - - 100 500 200 400
SHEET|KD03423-Y119|- 100 - 600 100 1,000 - - -
MYLAR SHEET|KD03423-Y615|- - - 600 - - - 1,000 -
GUIDE|KD03423-Y790|- - - 100 400 - 1,000 - -
GUIDE|KD03423-Y791|- - - 200 300 - 1,000 - -
COVER|KD03423-Y809|- - - - - - 1,400 400 1,200
SHEET ASSY|KD03423-Y984|- 2,000 - 2,000 - - - 2,000 -
PLATE|KD03424-Y231/02|- - - 3,400 - - 1,000 - 1,000
MYLAR L|KD03425-Y865|- - - 300 400 100 600 500 500
MYLAR R|KD03425-Y866|- - 100 300 500 100 100 500 -`.split('\n').map(line => line.split('|'));

const td = (cls, text = '') => `<td class="${cls}">${text}</td>`;
const blank = (count, cls = '') => td(cls).repeat(count);
const filter = '<button class="filter" aria-label="Filter"></button>';
const rowHead = (n, cls = '') => `<th scope="row" class="num ${cls}">${n}</th>`;

let html = '<colgroup>' + columns.map(c => c[1] ? `<col style="width:${c[1]}px">` : '<col>').join('') + '</colgroup><thead>';
html += '<tr class="outline">' + columns.map((c, i) =>
  `<th class="${c[0] === 'N' ? 'freeze' : ''}">${i > 17 && i < 27 ? '<button class="plus" aria-label="Expand"></button>' : ''}</th>`).join('') + '</tr>';
html += '<tr class="letters">' + columns.map((c, i) =>
  `<th scope="col" class="${i === 0 ? 'corner' : i > 17 ? 'far' : c[0] === 'E' ? 'on' : c[0] === 'N' ? 'freeze' : ''}">${c[0]}</th>`).join('') + '</tr></thead><tbody>';

html += '<tr class="row4">' + rowHead(4) + blank(1) + td('k t', 'JAN') + td('hint', '&lt;-Click here for the month forecasted sales') + blank(9) +
  td('has', filter) + td('has t fill freeze', '-&gt; Fill in only yellow shaded only' + filter) + td('has', filter).repeat(3) +
  months.map(m => td('c b bold', m)).join('') + td('b') + '</tr>';
html += '<tr class="rowtall">' + rowHead(5) + blank(1) + blank(9, 'b') + blank(3) + td('b freeze') + blank(2, 'b') +
  td('b r over', '<bdi>FCST REV. DATE -&gt;</bdi>') + blank(9, 'b r') + td('b') + '</tr>';
html += '<tr class="rowtall rowend">' + rowHead(6) + td('r') + td('k c', 'CUSTOMER') +
  ['P1', 'P2', 'P3', 'P4', 'P5', 'P6', 'P7', 'TTL'].map(p => td('k c bold', p)).join('') + blank(2) + td('r') +
  td('t freeze', 'CUST') + td('r t', 'PROD') + td('r c', 'PNAME') + td('r c', 'PNO') +
  months.map(m => td('r c' + (m === 'NOV' ? ' alt' : ''), 'FCST')).join('') + td('') + '</tr>';

products.forEach(([name, number, values], i) => {
  const customer = customers[i];
  const last = i === 11;
  const bottom = last || i === 10 ? 'b thick' : 'b';
  html += '<tr>' + rowHead(18 + i, i === 0 ? 'on' : '');
  html += customer
    ? td('r') + td(`r ${bottom} ${last ? 'total' : 't'}`, customer) + blank(8, `r ${bottom}`)
    : blank(10);
  html += blank(2) + td('r') + td('b t freeze', 'FDTP') + td('b r c', 'P3') + td('b r t', name) + td('b r t', number);
  html += values.split(' ').map(v => td('b r y ' + (v === '-' ? 'dash' : 'n'), v)).join('') + td('b y') + '</tr>';
});
document.getElementById('grid').innerHTML = html + '</tbody>';

const totals = [11437, 372, 124616, 81499, 268135, 145749, 607225];
const shares = [['1%', 57], ['0%', 177], ['10%', 262], ['7%', 371], ['22%', 485], ['12%', 631], ['49%', 718]];
const base = 198;
const step = 697 / 7;
let chart = '<defs><linearGradient id="bar" x1="0" y1="0" x2="1" y2="1"><stop offset="0" stop-color="#006b2a"/><stop offset="1" stop-color="#00b950"/></linearGradient></defs>';
totals.forEach((value, i) => {
  const center = Math.round(21 + step * (i + 0.5));
  const height = Math.round(value * 0.00029);
  chart += `<rect x="${center - 19}" y="${base - height}" width="38" height="${height}" fill="url(#bar)"/>`;
  chart += `<text class="val" x="${center}" y="${base - height - 8}">${value.toLocaleString('en-US')}</text>`;
  chart += `<text x="${center}" y="${base + 19}">${i + 1}</text>`;
});
let ticks = `M20 ${base}.5H717`;
for (let i = 0; i <= 7; i++) ticks += `M${Math.round(20 + step * i)}.5 ${base}v5`;
chart += `<path d="${ticks}" fill="none" stroke="#868686"/>`;
chart += shares.map(([label, x]) => `<text class="share-pct" x="${x}" y="241">${label}</text>`).join('');
document.getElementById('chart').innerHTML = chart;
```
